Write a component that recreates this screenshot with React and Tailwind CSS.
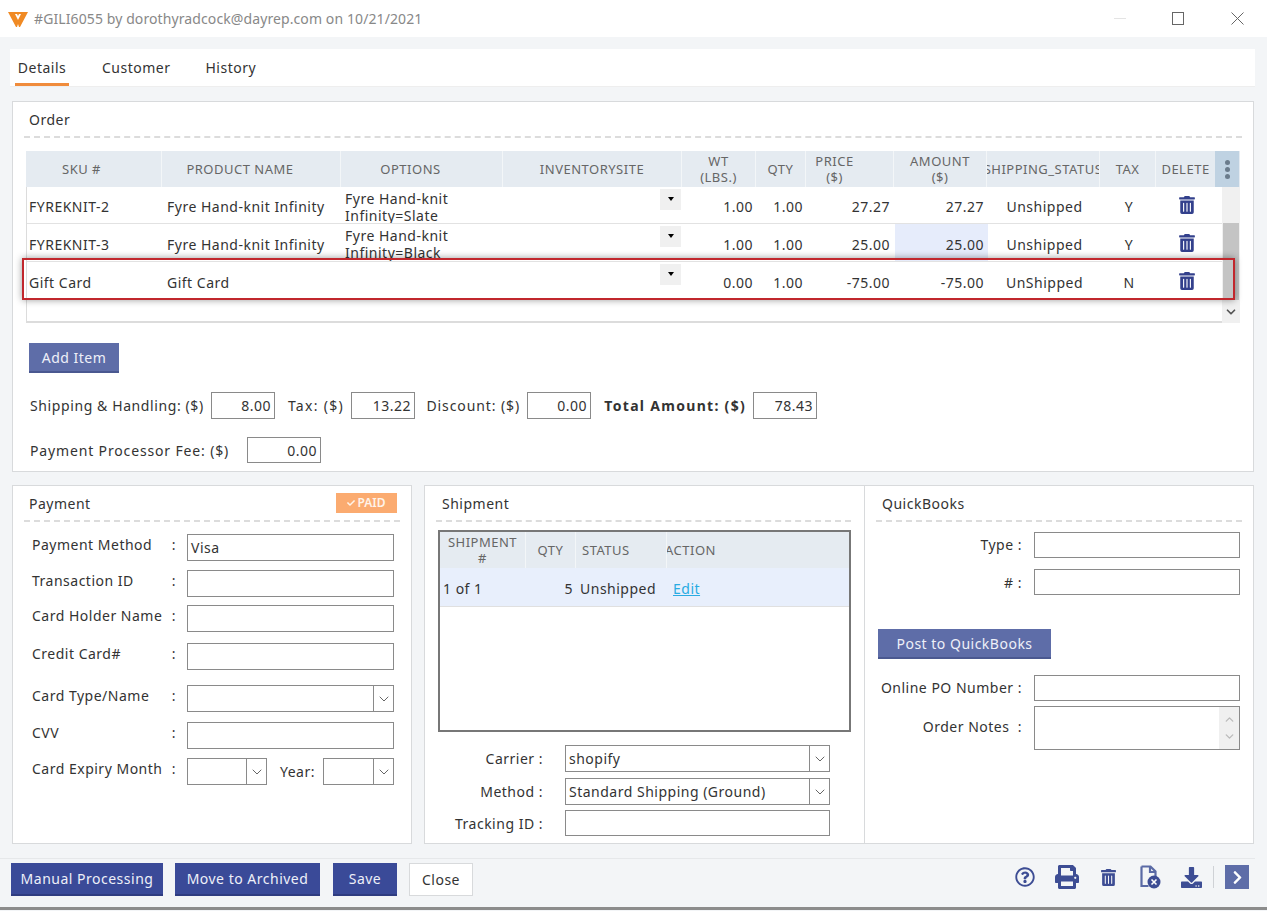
import { FaTrashAlt, FaPrint, FaDownload, FaChevronRight, FaRegQuestionCircle, FaCheck } from "react-icons/fa"
import { ChevronDown, ChevronUp } from "lucide-react"

const cols = ["w-[136px]", "w-[179px]", "w-[162px]", "w-[179px]", "w-[74px]", "w-[50px]", "w-[88px]", "w-[93px]", "w-[113px]", "w-[56px]", "w-[59px]"]

const rows = [
    { sku: "FYREKNIT-2", name: "Fyre Hand-knit Infinity", options: ["Fyre Hand-knit", "Infinity=Slate"], wt: "1.00", qty: "1.00", price: "27.27", amount: "27.27", status: "Unshipped", tax: "Y", h: "h-[37px]" },
    { sku: "FYREKNIT-3", name: "Fyre Hand-knit Infinity", options: ["Fyre Hand-knit", "Infinity=Black"], wt: "1.00", qty: "1.00", price: "25.00", amount: "25.00", status: "Unshipped", tax: "Y", h: "h-[38px]", hl: true },
    { sku: "Gift Card", name: "Gift Card", options: [], wt: "0.00", qty: "1.00", price: "-75.00", amount: "-75.00", status: "UnShipped", tax: "N", h: "h-[38px]" },
]

const Logo = () => (
    <svg width="20" height="16" viewBox="0 0 20 16">
        <path d="M0 1h20l-8 15h-1l-1-3-1 3H8z" fill="#f08a24" />
        <path d="M7 3h6l-3 6z" fill="#fff" />
        <path d="M9 3h2l-1 2z" fill="#f08a24" />
    </svg>
)

const Input = ({ w, h = "h-[27px]", value, right }) => (
    <div className={`${w} ${h} shrink-0 border border-[#8a8a8a] bg-white px-[3px] flex items-center ${right ? "justify-end" : ""}`}>{value}</div>
)

const Select = ({ w, value }) => (
    <div className={`${w} h-[27px] shrink-0 border border-[#8a8a8a] bg-white flex items-center`}>
        <span className="flex-1 pl-[3px] truncate">{value}</span>
        <span className="w-[20px] h-full border-l border-[#8a8a8a] flex items-center justify-center text-[#666]">
            <ChevronDown size={16} strokeWidth={1.5} />
        </span>
    </div>
)

const SectionTitle = ({ children, className }) => (
    <div className={`h-[36px] border-b-2 border-dashed border-[#dcdcdc] flex items-center ${className}`}>{children}</div>
)

const PayRow = ({ label, mt, children }) => (
    <div className={`flex ${mt}`}>
        <span className="w-[158px] h-[20px] pl-[8px] flex justify-between pr-[6px] whitespace-nowrap">
            <span>{label}</span>
            <span>:</span>
        </span>
        <span className="ml-[5px] flex items-center">{children}</span>
    </div>
)

const RightLabel = ({ w, children }) => (
    <span className={`${w} text-right whitespace-nowrap shrink-0`}>{children}</span>
)

const DarkBtn = ({ w, children }) => (
    <button className={`${w} h-[33px] bg-[#3a4a98] text-[#eef0f8] border-b-2 border-[#2f3c80]`}>{children}</button>
)

const App = () => {
    return (
        <div className="w-[1267px] h-[911px] overflow-hidden bg-[#f3f5f7] text-[#333] text-[14px] tracking-[0.5px] font-['Noto_Sans',sans-serif] flex flex-col">
            <div className="h-[37px] bg-white flex items-center pl-[8px] shrink-0">
                <Logo />
                <span className="ml-[6px] text-[#888] text-[14px] tracking-[0.1px]">#GILI6055 by dorothyradcock@dayrep.com on 10/21/2021</span>
                <div className="ml-auto flex items-center">
                    <span className="w-[12px] h-px bg-[#e4e4e4]"></span>
                    <span className="ml-[46px] w-[12px] h-[13px] border border-[#666]"></span>
                    <svg width="13" height="13" viewBox="0 0 13 13" className="ml-[47px] mr-[23px]">
                        <path d="M0.5 0.5l12 12M12.5 0.5l-12 12" stroke="#666" strokeWidth="1" />
                    </svg>
                </div>
            </div>

            <div className="mt-[12px] ml-[10px] w-[1245px] h-[38px] bg-white border-b border-[#eee] flex items-end shrink-0">
                <div className="ml-[5px] w-[54px] h-[38px] pt-[3px] border-b-[3px] border-[#f08c3c] flex items-center justify-center whitespace-nowrap">Details</div>
                <div className="ml-[33px] h-[38px] flex items-center">Customer</div>
                <div className="ml-[35px] h-[38px] flex items-center">History</div>
            </div>

            <div className="mt-[14px] ml-[12px] w-[1242px] h-[371px] bg-white border border-[#d8dadc] shrink-0 px-[11px] relative">
                <SectionTitle className="pl-[5px]">Order</SectionTitle>

                <div className="mt-[13px] ml-[2px] w-[1214px] relative">
                    <div className="flex h-[36px] bg-[#e5ebf1] text-[#666] text-[13px] text-center leading-[16px]">
                        <div className={`${cols[0]} border-r border-[#f3f6f8] flex items-center justify-center pr-[24px]`}>SKU #</div>
                        <div className={`${cols[1]} border-r border-[#f3f6f8] flex items-center justify-center pr-[22px]`}>PRODUCT NAME</div>
                        <div className={`${cols[2]} border-r border-[#f3f6f8] flex items-center justify-center pr-[22px]`}>OPTIONS</div>
                        <div className={`${cols[3]} border-r border-[#f3f6f8] flex items-center justify-center`}>INVENTORYSITE</div>
                        <div className={`${cols[4]} border-r border-[#f3f6f8] flex items-center justify-center`}>WT<br />(LBS.)</div>
                        <div className={`${cols[5]} border-r border-[#f3f6f8] flex items-center justify-center`}>QTY</div>
                        <div className={`${cols[6]} border-r border-[#f3f6f8] flex items-center justify-center pr-[30px]`}>PRICE<br />($)</div>
                        <div className={`${cols[7]} border-r border-[#f3f6f8] flex items-center justify-center`}>AMOUNT<br />($)</div>
                        <div className={`${cols[8]} border-r border-[#f3f6f8] flex items-center justify-center overflow-hidden whitespace-nowrap`}>SHIPPING_STATUS</div>
                        <div className={`${cols[9]} border-r border-[#f3f6f8] flex items-center justify-center`}>TAX</div>
                        <div className={`${cols[10]} flex items-center justify-center`}>DELETE</div>
                        <div className="w-[24px] bg-[#bfd2e2] flex flex-col items-center justify-center gap-[2px]">
                            <span className="w-[5px] h-[5px] rounded-full bg-[#6b7c8c]"></span>
                            <span className="w-[5px] h-[5px] rounded-full bg-[#6b7c8c]"></span>
                            <span className="w-[5px] h-[5px] rounded-full bg-[#6b7c8c]"></span>
                        </div>
                    </div>

                    <div className="flex h-[136px] border-b-2 border-[#dcdcdc]">
                        <div className="w-[1196px] border-l border-[#dcdcdc]">
                            {rows.map((r) => (
                                <div key={r.sku} className={`${r.h} flex overflow-hidden border-b border-[#e2e2e2] last:border-b-0`}>
                                    <div className={`${cols[0]} pl-[2px] pt-[3px] flex items-center`}>{r.sku}</div>
                                    <div className={`${cols[1]} pl-[4px] pt-[3px] flex items-center whitespace-nowrap`}>{r.name}</div>
                                    <div className={`${cols[2]} pl-[3px] pt-[3px] leading-[17px] whitespace-nowrap`}>
                                        {r.options.map((o) => <div key={o}>{o}</div>)}
                                    </div>
                                    <div className={`${cols[3]} flex justify-end`}>
                                        <span className="mt-[2px] mr-[2px] w-[21px] h-[21px] bg-[#f0f0f0] flex justify-center pt-[8px]">
                                            <span className="w-0 h-0 border-x-[3px] border-t-[4px] border-x-transparent border-t-black"></span>
                                        </span>
                                    </div>
                                    <div className={`${cols[4]} flex items-center justify-end pr-[4px] pt-[3px]`}>{r.wt}</div>
                                    <div className={`${cols[5]} flex items-center justify-end pr-[4px] pt-[3px]`}>{r.qty}</div>
                                    <div className={`${cols[6]} flex items-center justify-end pr-[5px] pt-[3px]`}>{r.price}</div>
                                    <div className={`${cols[7]} flex items-center justify-end pr-[4px] pt-[3px] ${r.hl ? "bg-[#e6ecfb]" : ""}`}>{r.amount}</div>
                                    <div className={`${cols[8]} flex items-center justify-center pt-[3px]`}>{r.status}</div>
                                    <div className={`${cols[9]} flex items-center justify-center pt-[3px]`}>{r.tax}</div>
                                    <div className={`${cols[10]} flex items-center justify-center text-[#33408c]`}><FaTrashAlt size={18} /></div>
                                </div>
                            ))}
                        </div>
                        <div className="w-[18px] -mb-[2px] bg-[#f0f0f0] flex flex-col">
                            <div className="h-[36px]"></div>
                            <div className="h-[77px] mx-[1px] bg-[#c4c4c4]"></div>
                            <div className="flex-1 flex items-center justify-center text-[#555]"><ChevronDown size={14} strokeWidth={3} /></div>
                        </div>
                    </div>

                    <div className="absolute left-[-4px] top-[107px] w-[1213px] h-[42px] border-[2px] border-[#c1272d] shadow-[0_0_7px_rgba(0,0,0,0.4)]"></div>
                </div>

                <button className="mt-[20px] ml-[5px] w-[90px] h-[30px] bg-[#5e6da8] text-[#eef0f8] border-b-2 border-[#4a5890]">Add Item</button>

                <div className="mt-[19px] ml-[6px] flex items-center h-[27px]">
                    <RightLabel w="w-[181px] !text-left tracking-[0.6px]">Shipping &amp; Handling: ($)</RightLabel>
                    <Input w="w-[64px]" value="8.00" right />
                    <RightLabel w="w-[69px] tracking-[1.3px]">Tax: ($)</RightLabel>
                    <Input w="ml-[7px] w-[64px]" value="13.22" right />
                    <RightLabel w="w-[105px] tracking-[0.9px]">Discount: ($)</RightLabel>
                    <Input w="ml-[7px] w-[64px]" value="0.00" right />
                    <span className="w-[155px] text-right font-bold tracking-[1.3px] whitespace-nowrap">Total Amount: ($)</span>
                    <Input w="ml-[7px] w-[64px]" value="78.43" right />
                </div>

                <div className="mt-[18px] ml-[6px] flex items-center h-[26px]">
                    <span className="w-[217px] tracking-[0.85px] whitespace-nowrap">Payment Processor Fee: ($)</span>
                    <Input w="w-[74px]" h="h-[26px]" value="0.00" right />
                </div>
            </div>

            <div className="mt-[13px] ml-[12px] w-[1242px] h-[359px] flex shrink-0">
                <div className="w-[400px] border border-[#d8dadc] bg-white px-[11px]">
                    <div className="relative">
                        <SectionTitle className="pl-[5px]">Payment</SectionTitle>
                        <span className="absolute right-[3px] top-[7px] w-[61px] h-[20px] bg-[#fbab70] text-[#fff3e8] text-[12px] tracking-normal font-semibold flex items-center justify-center gap-[2px]"><FaCheck size={8} />PAID</span>
                    </div>
                    <PayRow label="Payment Method" mt="mt-[12px]"><Input w="w-[207px]" value="Visa" /></PayRow>
                    <PayRow label="Transaction ID" mt="mt-[9px]"><Input w="w-[207px]" /></PayRow>
                    <PayRow label="Card Holder Name" mt="mt-[8px]"><Input w="w-[207px]" /></PayRow>
                    <PayRow label="Credit Card#" mt="mt-[11px]"><Input w="w-[207px]" /></PayRow>
                    <PayRow label="Card Type/Name" mt="mt-[15px]"><Select w="w-[207px]" /></PayRow>
                    <PayRow label="CVV" mt="mt-[10px]"><Input w="w-[207px]" /></PayRow>
                    <PayRow label="Card Expiry Month" mt="mt-[9px]">
                        <Select w="w-[80px]" />
                        <span className="ml-[13px] w-[43px]">Year:</span>
                        <Select w="w-[71px]" />
                    </PayRow>
                </div>

                <div className="ml-[12px] w-[441px] border border-[#d8dadc] bg-white px-[11px]">
                    <SectionTitle className="pl-[6px] w-[415px]">Shipment</SectionTitle>
                    <div className="mt-[8px] ml-[2px] w-[413px] h-[202px] border-2 border-[#777]">
                        <div className="flex h-[36px] bg-[#e5ebf1] text-[#666] text-[13px] leading-[16px] text-center">
                            <div className="w-[86px] border-r border-[#f3f6f8] flex items-center justify-center">SHIPMENT<br />#</div>
                            <div className="w-[50px] border-r border-[#f3f6f8] flex items-center justify-center">QTY</div>
                            <div className="w-[91px] border-r border-[#f3f6f8] flex items-center pl-[6px]">STATUS</div>
                            <div className="flex-1 flex items-center overflow-hidden"><span className="-ml-[2px]">ACTION</span></div>
                        </div>
                        <div className="flex h-[39px] bg-[#e8effc] items-center border-b border-[#e0e0e0] pt-[2px]">
                            <div className="w-[86px] pl-[3px]">1 of 1</div>
                            <div className="w-[47px] text-right">5</div>
                            <div className="w-[94px] pl-[7px] whitespace-nowrap">Unshipped</div>
                            <a className="ml-[6px] text-[#29abe2] underline">Edit</a>
                        </div>
                    </div>
                    <div className="mt-[13px] flex items-center">
                        <RightLabel w="w-[107px]">Carrier :</RightLabel>
                        <Select w="ml-[22px] w-[265px]" value="shopify" />
                    </div>
                    <div className="mt-[6px] flex items-center">
                        <RightLabel w="w-[107px]">Method :</RightLabel>
                        <Select w="ml-[22px] w-[265px]" value="Standard Shipping (Ground)" />
                    </div>
                    <div className="mt-[5px] flex items-center">
                        <RightLabel w="w-[107px]">Tracking ID :</RightLabel>
                        <Input w="ml-[22px] w-[265px]" h="h-[26px]" />
                    </div>
                </div>

                <div className="w-[389px] border border-l-0 border-[#d8dadc] bg-white px-[11px]">
                    <SectionTitle className="pl-[6px]">QuickBooks</SectionTitle>
                    <div className="mt-[10px] flex items-center">
                        <RightLabel w="w-[146px] pb-[2px]">Type :</RightLabel>
                        <Input w="ml-[12px] w-[206px]" h="h-[26px]" />
                    </div>
                    <div className="mt-[11px] flex items-center">
                        <RightLabel w="w-[146px]"># :</RightLabel>
                        <Input w="ml-[12px] w-[206px]" h="h-[26px]" />
                    </div>
                    <button className="mt-[34px] ml-[2px] w-[173px] h-[30px] bg-[#5e6da8] text-[#eef0f8] border-b-2 border-[#4a5890]">Post to QuickBooks</button>
                    <div className="mt-[16px] flex items-center">
                        <RightLabel w="w-[146px] pb-[2px]">Online PO Number :</RightLabel>
                        <Input w="ml-[12px] w-[206px]" h="h-[26px]" />
                    </div>
                    <div className="mt-[5px] flex">
                        <RightLabel w="w-[146px] pt-[10px]">Order Notes&nbsp;&nbsp;:</RightLabel>
                        <div className="ml-[12px] w-[206px] h-[44px] border border-[#8a8a8a] bg-white flex justify-end">
                            <div className="w-[20px] bg-[#f0f0f0] flex flex-col items-center justify-center gap-[4px] text-[#bbb]">
                                <ChevronUp size={13} strokeWidth={2.5} />
                                <ChevronDown size={13} strokeWidth={2.5} />
                            </div>
                        </div>
                    </div>
                </div>
            </div>

            <div className="mt-[14px] h-[49px] w-[1255px] border-t border-[#e6e8ea] flex items-center pl-[11px] pb-[8px] shrink-0">
                <DarkBtn w="w-[152px]">Manual Processing</DarkBtn>
                <span className="ml-[12px]"><DarkBtn w="w-[145px]">Move to Archived</DarkBtn></span>
                <span className="ml-[13px]"><DarkBtn w="w-[64px]">Save</DarkBtn></span>
                <button className="ml-[12px] w-[64px] h-[33px] bg-white border border-[#d8dadc]">Close</button>
                <div className="ml-auto flex items-center text-[#3d4d94] -mt-[4px]">
                    <FaRegQuestionCircle size={20} />
                    <FaPrint size={24} className="ml-[20px]" />
                    <FaTrashAlt size={17} className="ml-[21px]" />
                    <svg width="22" height="24" viewBox="0 0 22 24" className="ml-[22px]">
                        <path d="M2.5 1.5h9l5 5v5M11 1.5v5.5h5.5M2.5 1.5v19.5h7" fill="none" stroke="#5a6aa5" strokeWidth="2.2" />
                        <circle cx="15" cy="17" r="6.5" fill="#3d4d94" />
                        <path d="M12.5 14.5l5 5M17.5 14.5l-5 5" stroke="#fff" strokeWidth="1.6" />
                    </svg>
                    <FaDownload size={21} className="ml-[20px]" />
                    <span className="ml-[11px] h-[22px] border-l border-[#cfd2d6]"></span>
                    <span className="ml-[11px] mr-[6px] w-[24px] h-[24px] bg-[#5e6da8] flex items-center justify-center text-white"><FaChevronRight size={15} /></span>
                </div>
            </div>
            <div className="h-[3px] bg-[#8c8c8c] shrink-0"></div>
        </div>
    )
}
export default App
